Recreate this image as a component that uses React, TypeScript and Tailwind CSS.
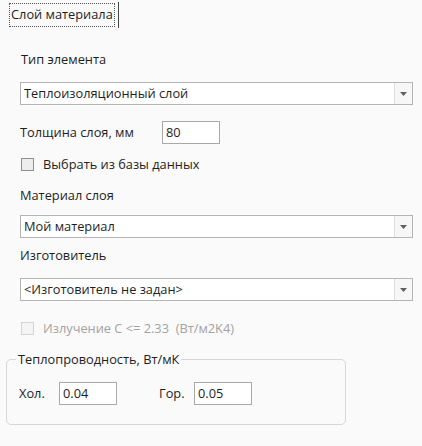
import React from 'react';

/**
 * Material layer properties panel
 */

function Combo({ value }: { value: string }) {
  return (
    <div className="ml-[20px] flex h-[23px] w-[393px] border border-[#b4b4b4] bg-white">
      <div className="flex flex-1 items-center pl-[3px] text-[#1e1e1e]">{value}</div>
      <div className="flex w-[18px] items-center justify-center border-l border-[#dcdcdc] bg-[#f7f7f7]">
        <svg width="7" height="4" viewBox="0 0 7 4">
          <path d="M0 0h7L3.5 4z" fill="#606060" />
        </svg>
      </div>
    </div>
  );
}

function Field({ value, width }: { value: string; width: string }) {
  return (
    <div className={`flex h-[23px] items-center border border-[#a9a9a9] bg-white pl-[3px] ${width}`}>
      {value}
    </div>
  );
}

function Check({ label, disabled }: { label: string; disabled?: boolean }) {
  return (
    <div className="ml-[21px] flex h-[13px] items-center gap-[9px]">
      <div
        className={`h-[13px] w-[13px] border ${
          disabled ? 'border-[#d4d4d4] bg-[#f4f4f4]' : 'border-[#8f8f8f] bg-[#ededed]'
        }`}
      />
      <span className={`whitespace-pre ${disabled ? 'text-[#a3a3a3]' : 'text-[#1e1e1e]'}`}>{label}</span>
    </div>
  );
}

export default function App() {
  return (
    <div
      className="h-[446px] w-[422px] overflow-hidden bg-[#fafafa] text-[12.8px] text-[#1e1e1e]"
      style={{ fontFamily: '"Segoe UI", "Open Sans", "Liberation Sans", sans-serif' }}
    >
      {/* Tab header */}
      <div className="flex h-[30px] items-start pl-[9px] pt-[3px]">
        <div className="flex h-[24px] items-center border border-dotted border-[#555] px-[1px]">
          Слой материала
        </div>
        <div className="ml-[3px] mt-[-1px] h-[26px] w-px bg-[#444]" />
      </div>

      <div className="ml-[21px] mt-[20px] flex h-[20px] items-center">Тип элемента</div>
      <div className="mt-[12px]">
        <Combo value="Теплоизоляционный слой" />
      </div>

      <div className="ml-[20px] mt-[16px] flex h-[23px] items-center">
        <span className="w-[142px]">Толщина слоя, мм</span>
        <Field value="80" width="w-[58px]" />
      </div>

      <div className="mt-[14px]">
        <Check label="Выбрать из базы данных" />
      </div>

      <div className="ml-[20px] mt-[15px] flex h-[20px] items-center">Материал слоя</div>
      <div className="mt-[9px]">
        <Combo value="Мой материал" />
      </div>

      <div className="ml-[20px] mt-[8px] flex h-[20px] items-center">Изготовитель</div>
      <div className="mt-[12px]">
        <Combo value="<Изготовитель не задан>" />
      </div>

      <div className="mt-[21px]">
        <Check label="Излучение C <= 2.33  (Вт/м2K4)" disabled />
      </div>

      {/* Thermal conductivity group */}
      <div className="relative ml-[6px] mt-[24px] h-[66px] w-[340px] rounded-[5px] border border-[#d6d6d6]">
        <span className="absolute left-[9px] top-[-10px] bg-[#fafafa] px-[2px]">Теплопроводность, Вт/мК</span>
        <div className="mt-[22px] flex items-center pl-[12px]">
          <span className="w-[40px]">Хол.</span>
          <Field value="0.04" width="w-[58px]" />
          <span className="ml-[42px] w-[35px]">Гор.</span>
          <Field value="0.05" width="w-[58px]" />
        </div>
      </div>
    </div>
  );
}
